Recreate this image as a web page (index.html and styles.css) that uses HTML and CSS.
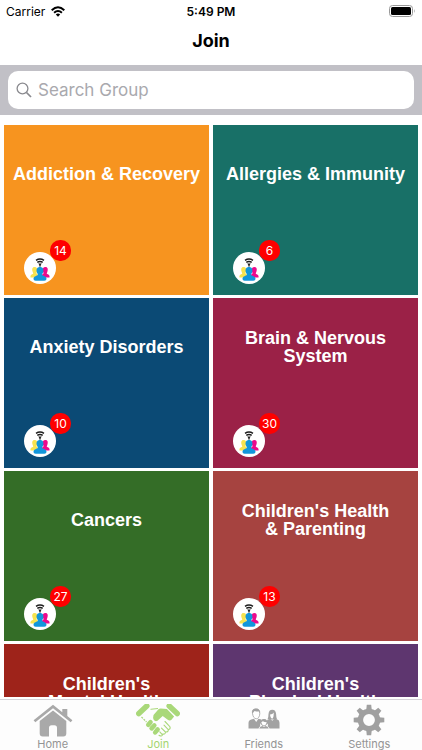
FILE: index.html
```html
<!DOCTYPE html>
<html lang="en">

<head>
  <meta charset="UTF-8">
  <meta name="viewport" content="width=device-width, initial-scale=1.0">
  <title>Join</title>
  <link rel="stylesheet" href="styles.css">
</head>

<body>

  <!-- shared icon: three people under a wifi signal -->
  <svg class="sprite" aria-hidden="true" width="0" height="0">
    <defs>
      <symbol id="group" viewBox="0 0 32 32">
        <g fill="none" stroke="#1c1c1c" stroke-width="1.500">
          <path d="M12 8.300q4-2.600 8 0" />
          <path d="M13.300 10.400q2.700-1.800 5.400 0" />
        </g>
        <path d="M14.200 11.500h3.600l-1.100 1.400v1.600h-1.400v-1.600z" fill="#1c1c1c" />
        <path d="M10.500 15c2.500 0 3.200 2 2.600 4.200-.3 1.200-.8 1.600-.6 2.400l2.500 2v2H6.500c-.4-2 .5-3 2.300-3.600.8-.4.300-1-.1-2-.9-2.500-.6-5 1.800-5z" fill="#f7e34f" />
        <path d="M21.500 15c-2.500 0-3.200 2-2.600 4.200.3 1.200.8 1.600.6 2.400l-2.500 2v2h8.500c.4-2-.5-3-2.300-3.600-.8-.4-.3-1 .1-2 .9-2.500.6-5-1.800-5z" fill="#ec0a8c" />
        <path d="M16 15c2.900 0 3.900 2.200 3.300 4.800-.3 1.300-1.300 2-1.200 3.200.8 1 4 .9 4.400 3.500 0 1.600-.9 2.200-2.200 2.200h-8.600c-1.300 0-2.200-.6-2.200-2.200.4-2.600 3.600-2.500 4.400-3.500.1-1.200-.9-1.900-1.200-3.200-.6-2.600.4-4.800 3.300-4.800z" fill="#1296db" />
      </symbol>
    </defs>
  </svg>

  <div class="status">
    <div class="carrier">
      <span>Carrier</span>
      <svg width="14" height="11" viewBox="0 0 14 11" aria-hidden="true">
        <g fill="none" stroke="#000" stroke-width="2">
          <path d="M.7 4.200Q7-1.600 13.300 4.200" />
          <path d="M3.100 6.700Q7 3.200 10.900 6.700" />
        </g>
        <path d="M4.800 8.400Q7 6.700 9.200 8.400L7 10.700z" />
      </svg>
    </div>
    <span class="clock">5:49 PM</span>
    <svg class="battery" width="27" height="12" viewBox="0 0 27 12" aria-hidden="true">
      <rect x=".5" y=".5" width="23" height="11" rx="3" fill="none" stroke="#999" />
      <rect x="2" y="2" width="20" height="8" rx="1.500" />
      <path d="M25 4q1.500 2 0 4z" fill="#999" />
    </svg>
  </div>

  <header>
    <h1>Join</h1>
  </header>

  <form class="search" role="search">
    <label class="field">
      <svg width="16" height="16" viewBox="0 0 16 16" fill="none" stroke="#8a8a8f" stroke-width="1.300" aria-hidden="true">
        <circle cx="6.500" cy="6.500" r="5.400" />
        <path d="M10.500 10.500l4.500 4.500" stroke-width="1.700" />
      </svg>
      <input type="search" placeholder="Search Group" aria-label="Search Group">
    </label>
  </form>

  <main class="groups">
    <a class="tile orange" href="#addiction">
      <h2>Addiction &amp; Recovery</h2>
      <span class="members"><svg><use href="#group" /></svg><span class="count">14</span></span>
    </a>
    <a class="tile teal" href="#allergies">
      <h2>Allergies &amp; Immunity</h2>
      <span class="members"><svg><use href="#group" /></svg><span class="count">6</span></span>
    </a>
    <a class="tile blue" href="#anxiety">
      <h2>Anxiety Disorders</h2>
      <span class="members"><svg><use href="#group" /></svg><span class="count">10</span></span>
    </a>
    <a class="tile wine" href="#brain">
      <h2>Brain &amp; Nervous<br>System</h2>
      <span class="members"><svg><use href="#group" /></svg><span class="count">30</span></span>
    </a>
    <a class="tile green" href="#cancers">
      <h2>Cancers</h2>
      <span class="members"><svg><use href="#group" /></svg><span class="count">27</span></span>
    </a>
    <a class="tile brick" href="#parenting">
      <h2>Children's Health<br>&amp; Parenting</h2>
      <span class="members"><svg><use href="#group" /></svg><span class="count">13</span></span>
    </a>
    <a class="tile red" href="#mental">
      <h2>Children's<br>Mental Health</h2>
    </a>
    <a class="tile purple" href="#physical">
      <h2>Children's<br>Physical Health</h2>
    </a>
  </main>

  <nav class="tabs">
    <a href="#home">
      <svg width="40" height="34" viewBox="0 0 40 34" fill="#a9a9a9" aria-hidden="true">
        <path d="M20 .8L.6 16.200l1.700 2L20 4.300l17.700 13.900 1.700-2-5.100-4.100V5h-5v3.200z" />
        <path d="M20 6.600L6.700 17v12.500q0 3 3 3H16v-8.700q0-2.600 2.600-2.600h2.800q2.600 0 2.600 2.600v8.700h6.300q3 0 3-3V17z" />
      </svg>
      <span>Home</span>
    </a>
    <a class="active" href="#join" aria-current="page">
      <svg width="44" height="34" viewBox="0 0 44 34" fill="#a9d879" aria-hidden="true">
        <g fill="none" stroke="#a9d879" stroke-width="5.500">
          <path d="M10.800 2L2.800 9.500" stroke-linecap="round" />
          <path d="M33.200 2l8 7.500" stroke-linecap="round" />
        </g>
        <path d="M14.500 5.300l7.500-.8" fill="none" stroke="#a9d879" />
        <path d="M17.500 11l5-5.800q1-.9 2.400-.8l6 .5 7.200 7.600-2.600 3.300q-1.800 1.500-4.100-.4L26.700 12l-5.200 4.800q-2.200 1-3.700-.7-1.200-2.200-.3-5.100z" />
        <path d="M5.500 13l5 5" fill="none" stroke="#a9d879" stroke-width="1.300" stroke-dasharray="2 1" />
        <g fill="none" stroke="#a9d879" stroke-linecap="round" stroke-width="4.600">
          <path d="M14.500 18.300l-2.200 2.500" />
          <path d="M18.300 21.500l-2.700 2.900" />
          <path d="M21.600 25.500l-2.400 2.900" />
        </g>
        <g fill="none" stroke="#a9d879" stroke-linecap="round" stroke-width="1.100">
          <path d="M23 31.300q2.800 1.700 3.500-.4l-2.700-3M26.500 30q3 .7 3-1.900l-4-4M29.500 28q3 .2 2.800-2.300l-4.300-4.500M32.200 25.500q2.700-.3 1.700-2.800L29 17.500" />
        </g>
      </svg>
      <span>Join</span>
    </a>
    <a href="#friends">
      <svg width="32" height="34" viewBox="0 0 32 34" fill="#a2a2a2" aria-hidden="true">
        <path d="M4.500 9.500q-.8-4 2.700-4.300 4.800-.8 4.600 4.300-.3 5-3.600 5.300-3-.4-3.700-5.300z" fill="#fff" stroke="#a2a2a2" stroke-width=".8" />
        <path d="M4.300 9.700q-1-5 3.500-5.200 4.500-.2 4.200 5.200L11 7.500q-3.200 0-4.500-.5z" />
        <path d="M.5 24.500v-5.500q0-3 2.800-3.600L6 14.700l2.200 3.300 2.200-3.300 3.100.8v3.200q-2 1.300-1.200 3.600-1.600.7-1.700 2.200z" />
        <path d="M19.500 15.500q1-2 1-5.500.3-4.300 3.800-4.300t3.800 4.300q0 3.500 1 5.500z" />
        <path d="M22 10.500q2.800 0 3.700-2 .2 5.400-1.500 6.200-1.700-.3-2.200-4.200z" fill="#fff" />
        <path d="M21.500 24.500q-.4-1.400-1.700-2 .8-2.300-1.100-3.600v-2.500l3.400-1.700 2.200 2 2.200-2 2.800.8q2.200.6 2.200 3.300v5.700z" />
        <path d="M13 18.500q.3-3 3-3t3 3q-.2 3.300-3 3.500-2.800-.2-3-3.500z" fill="#fff" stroke="#a2a2a2" stroke-width=".9" />
        <path d="M12.900 18.200q.2-3.300 3.100-3.300t3.100 3.300q-2.800 0-4.200-1z" />
        <path d="M11.300 24.500q0-1.800 2.900-2.400l1.800 1 1.800-1q2.900.6 2.900 2.400z" />
      </svg>
      <span>Friends</span>
    </a>
    <a href="#settings">
      <svg width="32" height="34" viewBox="-16 -16 32 34" aria-hidden="true">
        <circle r="8.600" fill="none" stroke="#a0a0a0" stroke-width="5.400" />
        <g fill="#a0a0a0">
          <path id="tooth" d="M-2.800-10l.6-5.300h4.400l.6 5.300z" />
          <use href="#tooth" transform="rotate(45)" />
          <use href="#tooth" transform="rotate(90)" />
          <use href="#tooth" transform="rotate(135)" />
          <use href="#tooth" transform="rotate(180)" />
          <use href="#tooth" transform="rotate(225)" />
          <use href="#tooth" transform="rotate(270)" />
          <use href="#tooth" transform="rotate(315)" />
        </g>
      </svg>
      <span>Settings</span>
    </a>
  </nav>

</body>

</html>
```

FILE: styles.css
```css
* {
  box-sizing: border-box;
}

body {
  margin: 0;
  height: 100vh;
  display: flex;
  flex-direction: column;
  background: #fff;
  color: #000;
  font-family: Inter, "Liberation Sans", sans-serif;
}

a {
  color: inherit;
  text-decoration: none;
}

.sprite {
  position: absolute;
}

.status {
  display: grid;
  grid-template-columns: 1fr auto 1fr;
  align-items: center;
  height: 22px;
  padding: 0 6px;
  font-size: 12px;
}

.carrier {
  display: flex;
  align-items: center;
  gap: 6px;
}

.clock {
  font-weight: 600;
}

.battery {
  justify-self: end;
}

header {
  padding: 7px 0 12px;
  text-align: center;
}

h1 {
  margin: 0;
  font-size: 18px;
  font-weight: 700;
  line-height: 24px;
}

.search {
  background: #c1c0c6;
  padding: 6px 8px;
}

.field {
  display: flex;
  align-items: center;
  gap: 6px;
  height: 38px;
  padding: 0 8px;
  background: #fff;
  border-radius: 10px;
}

.field input {
  flex: 1;
  min-width: 0;
  padding: 0;
  border: none;
  outline: none;
  background: none;
  font: 17px Inter, "Liberation Sans", sans-serif;
}

.field input::placeholder {
  color: #a9a9ae;
}

.groups {
  flex: 1;
  min-height: 0;
  margin-bottom: 2px;
  overflow-y: auto;
  scrollbar-width: none;
  display: grid;
  grid-template-columns: 1fr 1fr;
  grid-auto-rows: 170px;
  gap: 3px 4px;
  padding: 10px 4px 0;
}

.tile {
  display: flex;
  flex-direction: column;
  justify-content: space-between;
  padding: 21px 8px 11px;
  color: #fff;
}

.tile h2 {
  margin: 0;
  height: 56px;
  display: grid;
  place-content: center;
  text-align: center;
  font: bold 18px/18px "Liberation Sans", Arial, sans-serif;
}

.orange { background: #f7941f; }
.teal { background: #187067; }
.blue { background: #0b4a75; }
.wine { background: #9b2147; }
.green { background: #346d27; }
.brick { background: #a64340; }
.red { background: #9e231a; }
.purple { background: #5e366f; }

.members {
  position: relative;
  width: 32px;
  height: 32px;
  margin-left: 12px;
  border-radius: 50%;
  background: #fff;
}

.members svg {
  display: block;
  width: 32px;
  height: 32px;
}

/* unread count sits over the top right edge of the avatar */
.count {
  position: absolute;
  left: 26px;
  top: -12px;
  width: 21px;
  height: 21px;
  border-radius: 10px;
  background: #fe0000;
  font-size: 12px;
  line-height: 21px;
  text-align: center;
}

.tabs {
  display: grid;
  grid-template-columns: repeat(4, 1fr);
  height: 51px;
  border-top: 1px solid #d5d3d8;
  background: #fdfdfd;
  color: #949494;
}

.tabs a {
  display: flex;
  flex-direction: column;
  align-items: center;
  padding-top: 4px;
  font-size: 11px;
  line-height: 12px;
}

.tabs .active {
  color: #a4d56f;
}
```
